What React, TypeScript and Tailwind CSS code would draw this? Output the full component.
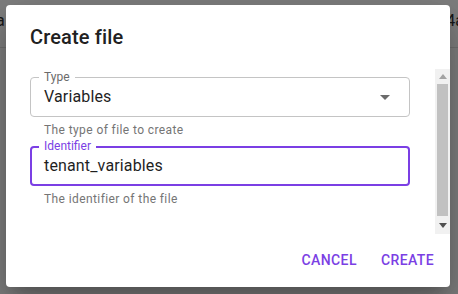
import React from "react";

const PURPLE = "#7b3fe4";

function OutlinedField({
  label,
  value,
  helper,
  focused,
  select,
}: {
  label: string;
  value: string;
  helper: string;
  focused?: boolean;
  select?: boolean;
}) {
  return (
    <div className="flex flex-col mt-2 mb-1">
      <div
        className={`relative h-[40px] rounded-[4px] flex items-center pr-[12px] ${
          focused ? "border-2 border-[#7b3fe4] pl-[12px]" : "border border-[#c4c4c4] pl-[13px]"
        }`}
      >
        <span
          className={`absolute px-[5px] bg-white text-[12px] leading-[16px] ${
            focused ? "left-[7px] top-[-10px] text-[#7b3fe4]" : "left-[8px] top-[-9px] text-[#6b6b6b]"
          }`}
        >
          {label}
        </span>
        <span className="flex-1 text-[16px] leading-[24px] text-[#1f1f1f] tracking-[0.15px]">{value}</span>
        {select && (
          <svg width="24" height="24" viewBox="0 0 24 24" className="text-[#6b6b6b]">
            <path d="M7 10l5 5 5-5z" fill="currentColor" />
          </svg>
        )}
      </div>
      <p className="mt-[3px] px-[14px] text-[12px] leading-[20px] text-[#757575] tracking-[0.4px]">{helper}</p>
    </div>
  );
}

export default function App() {
  return (
    <div
      className="relative w-[458px] h-[294px] overflow-hidden bg-white"
      style={{ fontFamily: "Roboto, 'Noto Sans', sans-serif" }}
    >
      {/* page behind the dialog */}
      <div className="h-[48px] border-b border-[#e0e0e0] flex items-center justify-between text-[16px] text-[#333]">
        <span className="-ml-[4px] mt-[-6px]">a</span>
        <span className="mr-[-6px] mt-[-6px]">4a</span>
      </div>

      {/* backdrop */}
      <div className="absolute inset-0 bg-black/[0.5] pl-[6px] pr-[8px] pt-[5px] pb-[7px] flex">
        <div className="flex-1 flex flex-col bg-white rounded-[4px] shadow-[0_11px_15px_-7px_rgba(0,0,0,0.2),0_24px_38px_3px_rgba(0,0,0,0.14),0_9px_46px_8px_rgba(0,0,0,0.12)]">
          <h2 className="px-6 pt-4 pb-4 text-[20px] leading-[32px] font-medium text-[#212121] tracking-[0.15px]">
            Create file
          </h2>

          <div className="flex h-[165px]">
            <div className="flex-1 pl-6 pr-[25px] overflow-hidden">
              <OutlinedField label="Type" value="Variables" helper="The type of file to create" select />
              <div className="-mt-[2px]">
                <OutlinedField
                  label="Identifier"
                  value="tenant_variables"
                  helper="The identifier of the file"
                  focused
                />
              </div>
            </div>
            {/* scrollbar */}
            <div className="w-[15px] bg-[#f1f1f1] flex flex-col items-center">
              <div className="h-[15px] flex items-center justify-center">
                <svg width="8" height="5" viewBox="0 0 8 5">
                  <path d="M0 5L4 0L8 5Z" fill="#a3a3a3" />
                </svg>
              </div>
              <div className="w-[11px] h-[132px] bg-[#c1c1c1]" />
              <div className="flex-1 flex items-center justify-center">
                <svg width="8" height="5" viewBox="0 0 8 5">
                  <path d="M0 0L8 0L4 5Z" fill="#505050" />
                </svg>
              </div>
            </div>
          </div>

          <div className="flex justify-end items-center p-2 gap-2 pt-[8px]">
            {["Cancel", "Create"].map((t) => (
              <button
                key={t}
                className="h-[36px] px-2 uppercase text-[14px] font-medium tracking-[0.4px]"
                style={{ color: PURPLE }}
              >
                {t}
              </button>
            ))}
          </div>
        </div>
      </div>
    </div>
  );
}
